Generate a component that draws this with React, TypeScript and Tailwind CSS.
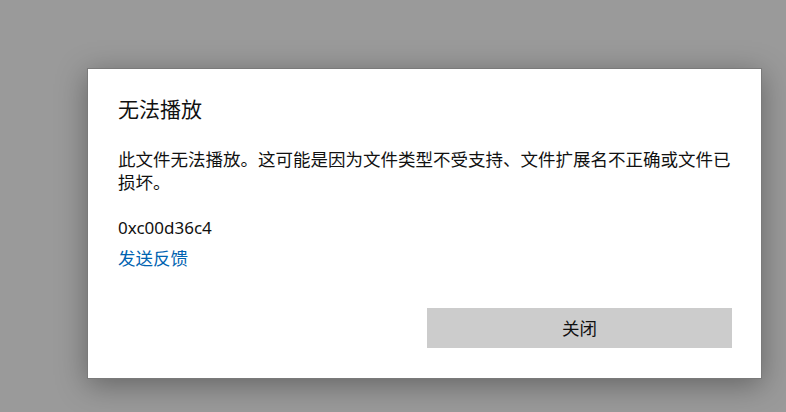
function App() {
    const font = "font-['Noto_Sans','Noto_Sans_CJK_SC',sans-serif]"

    return (
        <div className={`w-[786px] h-[412px] bg-[#9a9a9a] pt-[68px] pl-[87px] overflow-hidden ${font}`}>
            <div className="w-[675px] h-[311px] bg-white border border-[#7a7a7a] shadow-[0_6px_28px_rgba(0,0,0,0.35)] flex flex-col pl-[30px] pr-[29px] pt-[26px] pb-[30px]">
                <p className="text-[21px] leading-[28px] text-[#111]">无法播放</p>

                <p className="mt-[25px] text-[17.5px] leading-[23px] text-[#111]">
                    此文件无法播放。这可能是因为文件类型不受支持、文件扩展名不正确或文件已损坏。
                </p>

                <p className="mt-[22px] text-[17px] leading-[23px] text-[#111]">0xc00d36c4</p>
                <a className="mt-[8px] text-[17.5px] leading-[23px] text-[#0063b1] w-fit cursor-pointer">发送反馈</a>

                <div className="mt-auto grid grid-cols-2 gap-[4px]">
                    <div></div>
                    <button className="h-[40px] bg-[#cccccc] text-[17.5px] text-[#111]">关闭</button>
                </div>
            </div>
        </div>
    )
}

export default App
